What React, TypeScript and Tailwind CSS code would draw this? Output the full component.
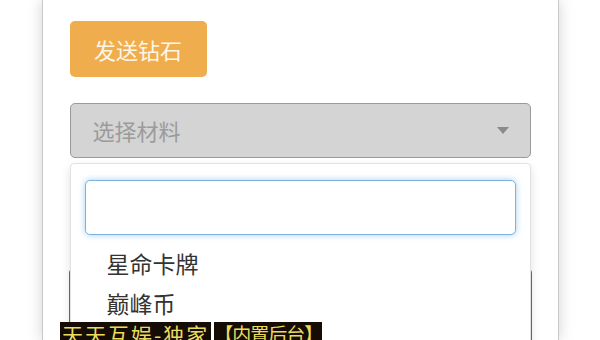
const cjk = { fontFamily: '"Noto Sans CJK SC", "Noto Sans", sans-serif' };

const App = () => {
    return (
        <div className="w-[600px] h-[340px] overflow-hidden bg-white relative" style={cjk}>
            <div className="flex justify-center h-full">
                <div className="w-[517px] h-full bg-white border-x border-[#c8c8c8] shadow-[0_0_14px_rgba(0,0,0,0.18)] px-[27px] pt-[21px] flex flex-col">
                    <button className="shrink-0 w-[137px] h-[56px] rounded-[5px] bg-[#f0ad4e] text-[#fdf6e6] text-[22px] leading-none flex items-center justify-center">
                        发送钻石
                    </button>
                    <div className="relative mt-[26px] shrink-0">
                        <div className="h-[55px] rounded-[5px] bg-[#d4d4d4] border border-[#9a9a9a] flex items-center justify-between pl-[22px] pr-[21px]">
                            <span className="text-[22px] text-[#9b9b9b]">选择材料</span>
                            <svg width="12" height="7" viewBox="0 0 12 7">
                                <path d="M0 0 L12 0 L6 7 Z" fill="#8a8a8a" />
                            </svg>
                        </div>
                        <div className="mt-[110px] -mx-px h-[80px] rounded-[5px] border-2 border-[#b9484a] bg-[#d9534f]" />
                        <div className="absolute left-0 right-0 top-[60px] h-[200px] bg-white border border-[#e2e2e2] rounded-t-[4px] shadow-[0_4px_10px_rgba(0,0,0,0.12)] px-[14px] pt-[16px]">
                            <div className="h-[55px] rounded-[5px] border border-[#7fb2d8] shadow-[0_0_6px_rgba(102,175,233,0.6)] bg-white" />
                            <div className="pl-[22px] mt-[14px] flex flex-col gap-[12px] text-[23px] text-[#333] leading-[28px]">
                                <span>星命卡牌</span>
                                <span>巅峰币</span>
                            </div>
                        </div>
                    </div>
                </div>
            </div>
            <div className="absolute left-[60px] top-[322px] flex gap-[3px] text-[21px] leading-[24px] text-[#ecdc5c]">
                <span className="bg-[#140c05] px-[2px] tracking-[2px]">天天互娱-独家</span>
                <span className="bg-[#140c05] text-[19px] tracking-[-1px]">【内置后台】</span>
            </div>
        </div>
    );
};

export default App;
